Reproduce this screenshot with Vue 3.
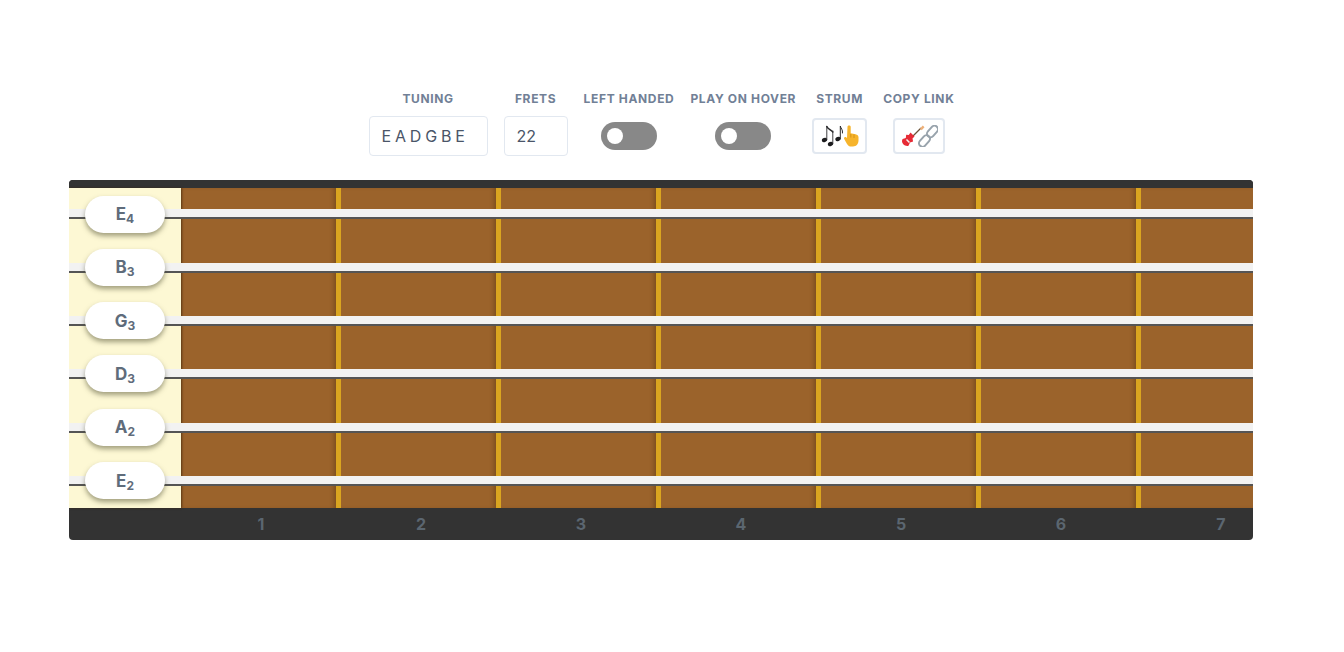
<template>
  <div class="page">
    <div class="controls">
      <div class="control">
        <label>Tuning</label>
        <div class="slot"><input class="text-input tuning" value="E A D G B E" /></div>
      </div>
      <div class="control">
        <label>Frets</label>
        <div class="slot"><input class="text-input frets" value="22" /></div>
      </div>
      <div class="control">
        <label>Left handed</label>
        <div class="slot"><span class="toggle"><span class="knob"></span></span></div>
      </div>
      <div class="control">
        <label>Play on hover</label>
        <div class="slot"><span class="toggle"><span class="knob"></span></span></div>
      </div>
      <div class="control">
        <label>Strum</label>
        <div class="slot">
          <button class="emoji-btn strum">
            <!-- notes + pointing hand -->
            <svg width="38" height="22" viewBox="0 0 38 22">
              <g fill="#1c1c1e">
                <ellipse cx="3.500" cy="15" rx="2.700" ry="2.100" transform="rotate(-20 3.500 15)" />
                <ellipse cx="9.500" cy="19" rx="2.700" ry="2.100" transform="rotate(-20 9.500 19)" />
                <ellipse cx="17" cy="14" rx="2.700" ry="2.100" transform="rotate(-20 17 14)" />
              </g>
              <g fill="none" stroke="#2a2a2c" stroke-linecap="round">
                <path d="M5.800 14.500V1.500M11.800 18.500V6" stroke-width=".9" />
                <path d="M5.800 1.500C6.800 4 10 5 11.800 7" stroke-width="1.600" />
                <path d="M19.300 13.500V1C19.800 3.500 22 4.500 21.500 8" stroke-width="1" />
              </g>
              <path
                d="M26.500 1.800c0-1.800 3.200-1.800 3.200 0v6.400l4.800 1c1.900.4 3 1.400 3 3v3.300c0 3-2 6-5.500 6h-1.500c-2.200 0-3.500-1-4.500-2.600l-2.800-5c-.8-1.400 1-2.600 2.200-1.500l.6.700z"
                fill="#f6b42c"
              />
              <path d="M29.800 9v3.500M33 9.500v3.500" stroke="#cf8c14" stroke-width=".8" fill="none" />
            </svg>
          </button>
        </div>
      </div>
      <div class="control">
        <label>Copy link</label>
        <div class="slot">
          <button class="emoji-btn copy">
            <!-- guitar + chain link -->
            <svg width="38" height="22" viewBox="0 0 38 22">
              <g transform="translate(2 0)">
                <path d="M9 13L19 3" stroke="#6b5236" stroke-width="1.300" />
                <path d="M18 3.500L20.800.6l1.700 1.700-2.800 2.900z" fill="#eeb078" />
                <path
                  d="M8.500 7.500l4 4-2 2 .6 3-3.100 1-1.500 3.200c-1.500.8-3.800 0-5.200-1.400S-.4 15.500.6 14l3.200-1 .4-3.200 2.600.2z"
                  fill="#e62b36"
                />
                <path d="M4.500 14.500l3 3" stroke="#f4f4f4" stroke-width="1.500" />
              </g>
              <g fill="none" stroke="#98a3ac" stroke-width="2">
                <rect x="-6.500" y="-3.500" width="13" height="7" rx="3.500" transform="translate(24.500 16) rotate(-48)" />
                <rect x="-6.500" y="-3.500" width="13" height="7" rx="3.500" transform="translate(32.500 6.500) rotate(-48)" />
              </g>
            </svg>
          </button>
        </div>
      </div>
    </div>

    <div class="board">
      <div class="top-bar"></div>
      <div class="neck">
        <div class="nut"></div>
        <div v-for="n in fretNumbers" :key="n" class="fret"></div>
        <div class="strings">
          <div v-for="s in strings" :key="s.note + s.octave" class="row">
            <div class="string"></div>
            <div class="pill">{{ s.note }}<sub>{{ s.octave }}</sub></div>
          </div>
        </div>
      </div>
      <div class="numbers">
        <div class="nut-space"></div>
        <div v-for="n in fretNumbers" :key="n" class="number">{{ n }}</div>
      </div>
    </div>
  </div>
</template>

<script setup>
const strings = [
  { note: "E", octave: 4 },
  { note: "B", octave: 3 },
  { note: "G", octave: 3 },
  { note: "D", octave: 3 },
  { note: "A", octave: 2 },
  { note: "E", octave: 2 },
];

const fretNumbers = [1, 2, 3, 4, 5, 6, 7];
</script>

<style>
html,
body {
  background: #fff;
}
</style>

<style scoped>
.page {
  width: 1184px;
  margin-left: 69px;
  padding-top: 92px;
  font-family: Inter, "Liberation Sans", sans-serif;
}

.controls {
  display: flex;
  justify-content: center;
  gap: 16px;
  padding-left: 1px;
  margin-bottom: 24px;
}

.control {
  display: flex;
  flex-direction: column;
  align-items: center;
}

.control label {
  font-size: 12px;
  line-height: 14px;
  font-weight: 700;
  color: #718096;
  text-transform: uppercase;
  letter-spacing: 0.65px;
  margin-bottom: 10px;
  white-space: nowrap;
}

.slot {
  height: 40px;
  display: flex;
  align-items: center;
  justify-content: center;
}

.text-input {
  box-sizing: border-box;
  height: 40px;
  border: 1px solid #e2e8f0;
  border-radius: 4px;
  padding: 0 12px;
  font-family: inherit;
  font-size: 16px;
  color: #4a5568;
  background: #fff;
  outline: none;
}

.tuning {
  width: 119px;
  word-spacing: -0.7px;
}

.frets {
  width: 64px;
}

.toggle {
  display: block;
  position: relative;
  width: 56px;
  height: 28px;
  border-radius: 14px;
  background: #888;
}

.knob {
  position: absolute;
  left: 6px;
  top: 6px;
  width: 16px;
  height: 16px;
  border-radius: 50%;
  background: #fff;
}

.emoji-btn {
  box-sizing: border-box;
  height: 36px;
  padding: 0;
  border: 2px solid #e2e8f0;
  border-radius: 4px;
  background: #fff;
  display: flex;
  align-items: center;
  justify-content: center;
}

.strum {
  width: 55px;
}

.copy {
  width: 52px;
}

.board {
  height: 360px;
  border-radius: 4px;
  overflow: hidden;
  background: #333;
}

.top-bar {
  height: 8px;
  background: #333;
}

.neck {
  position: relative;
  display: flex;
  height: 320px;
}

.nut,
.nut-space {
  flex: 0 0 112px;
}

.nut {
  position: relative;
  z-index: 1;
  background: #fdf8d4;
  box-shadow: 1px 0 2px rgba(60, 35, 10, 0.7);
}

.fret {
  flex: 0 0 160px;
  box-sizing: border-box;
  background: #9b632b;
  border-right: 5px solid #daa520;
  box-shadow: inset -4px 0 4px -2px rgba(60, 35, 10, 0.35);
}

.strings {
  position: absolute;
  inset: 0;
  z-index: 2;
  display: grid;
  grid-template-rows: repeat(6, 1fr);
}

.row {
  position: relative;
}

.string {
  position: absolute;
  left: 0;
  right: 0;
  top: 21.4px;
  height: 8px;
  background: #f2f2f2;
  border-bottom: 2px solid #555;
}

.pill {
  position: absolute;
  left: 16px;
  top: 7.5px;
  box-sizing: border-box;
  width: 80px;
  height: 37px;
  border-radius: 19px;
  background: #fff;
  box-shadow: 0 3px 5px rgba(70, 70, 40, 0.5);
  display: flex;
  align-items: center;
  justify-content: center;
  font-size: 17px;
  font-weight: 700;
  color: #5f6c7b;
}

.pill sub {
  font-size: 12px;
  line-height: 1;
  margin-top: 10px;
  vertical-align: baseline;
}

.numbers {
  display: flex;
  height: 32px;
}

.number {
  flex: 0 0 160px;
  text-align: center;
  line-height: 33px;
  font-size: 16px;
  font-weight: 700;
  color: #5b6670;
}
</style>
